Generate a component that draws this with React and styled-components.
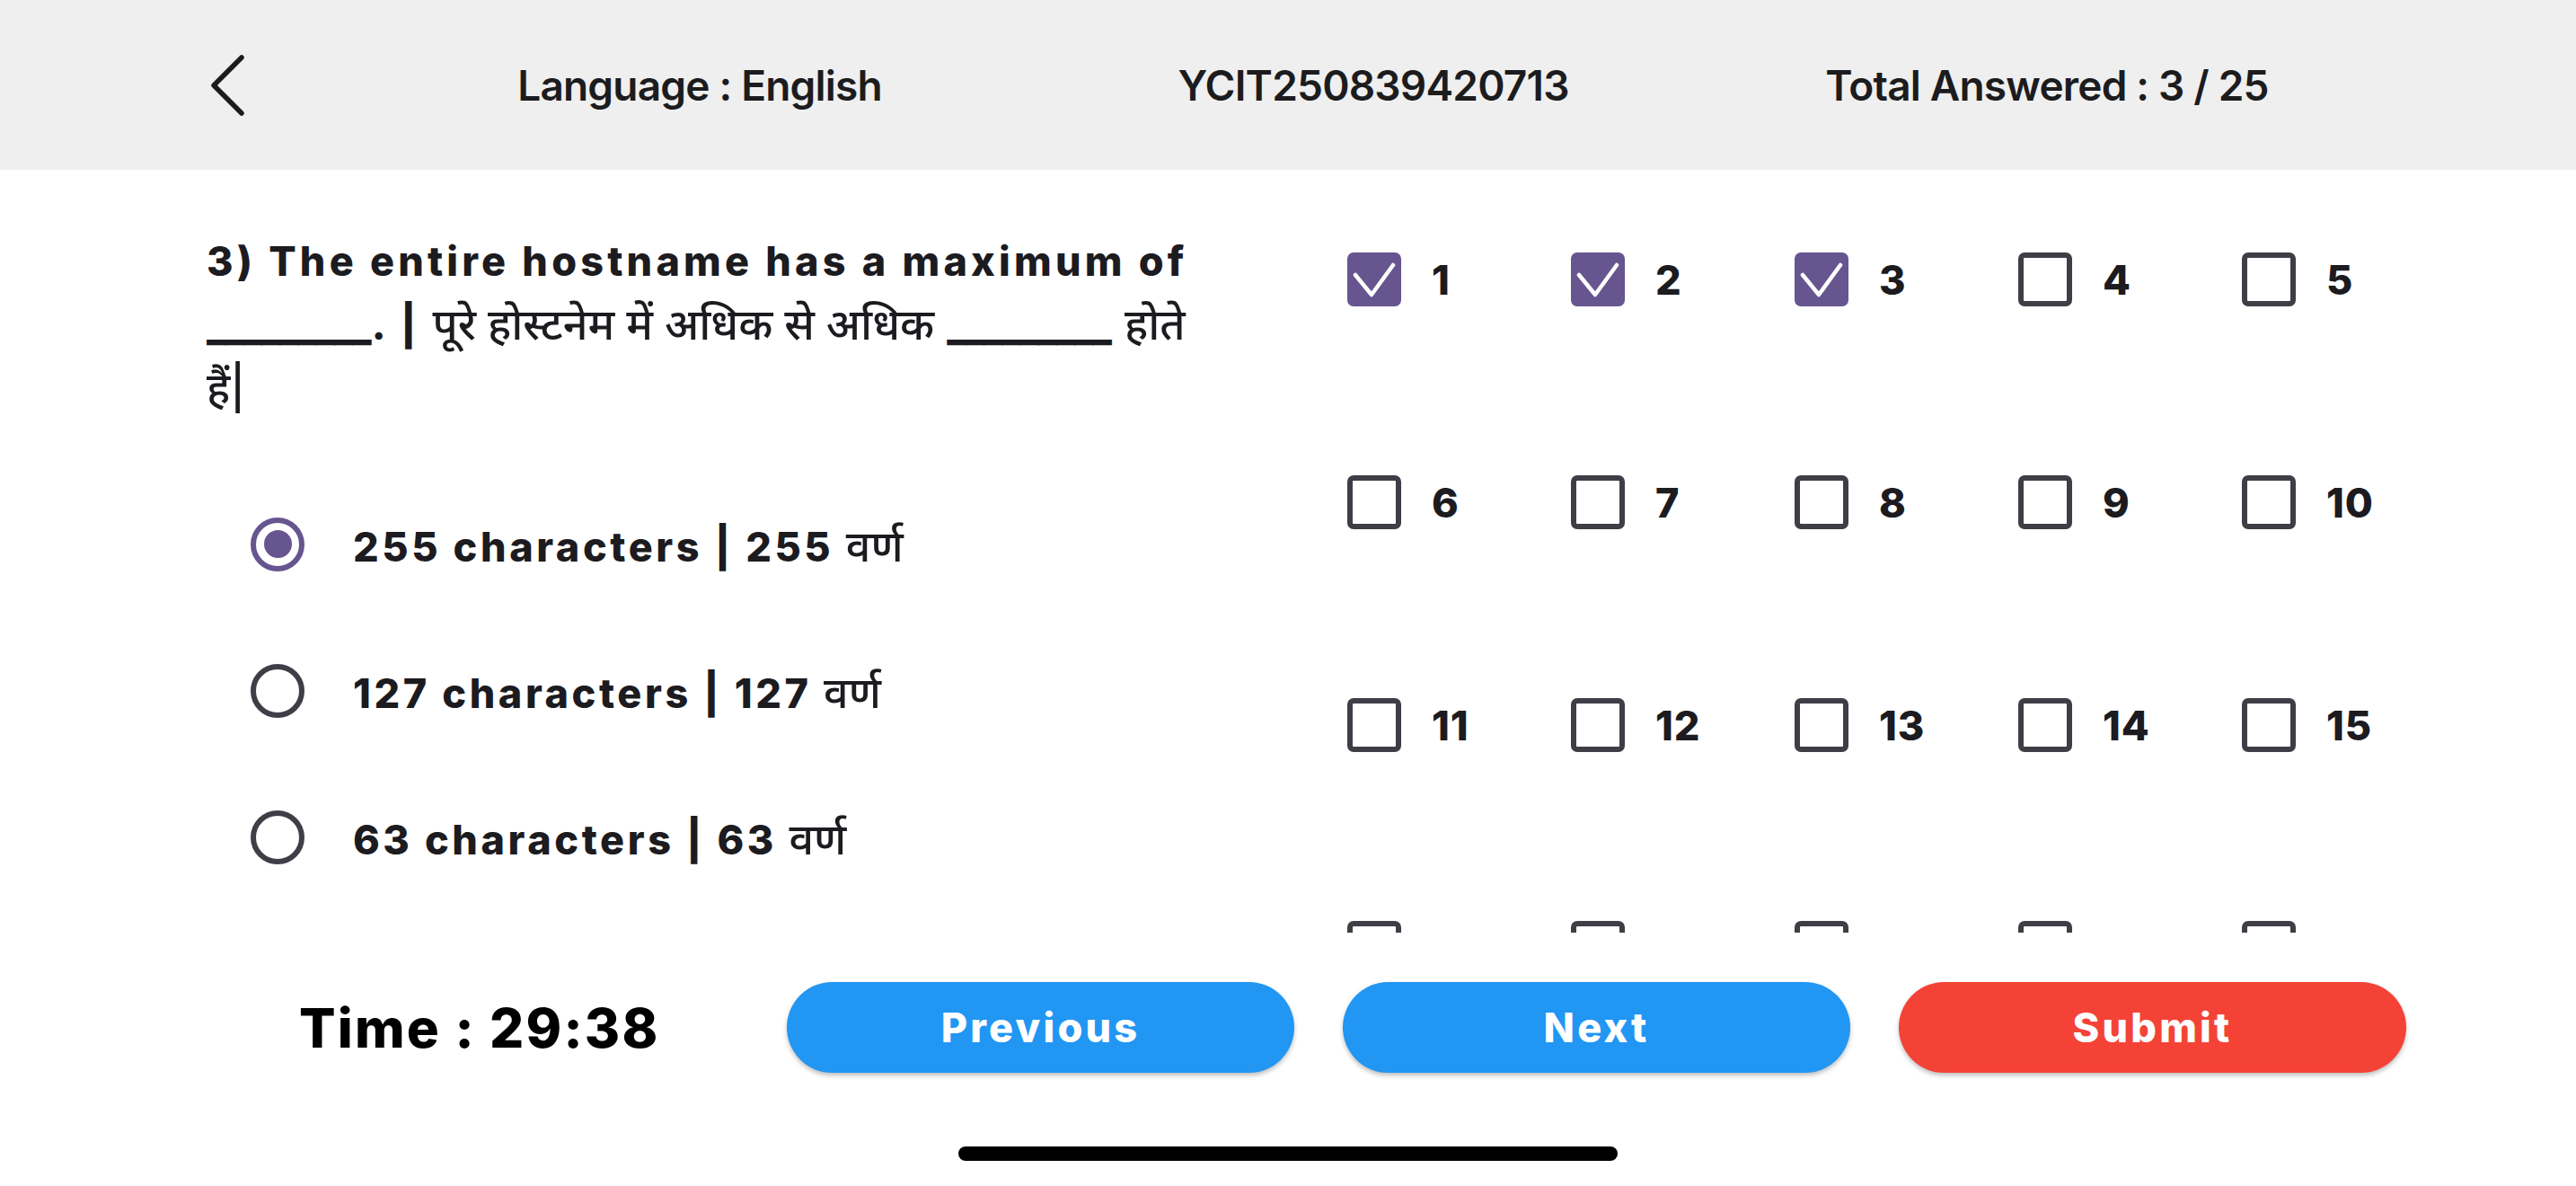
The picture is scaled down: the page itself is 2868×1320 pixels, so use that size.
import React from "react";
import styled, { createGlobalStyle } from "styled-components";

const Global = createGlobalStyle`
  html, body { margin: 0; padding: 0; background: #ffffff; }
  body {
    font-family: Inter, "Noto Sans", "Noto Sans Devanagari", "Lohit Devanagari", "DejaVu Sans", sans-serif;
    color: #1c1b1f;
  }
  * { box-sizing: border-box; }
`;

const Page = styled.div`
  width: 2868px;
  height: 1320px;
  display: flex;
  flex-direction: column;
  overflow: hidden;
  background: #ffffff;
`;

const Header = styled.header`
  flex: 0 0 189px;
  display: flex;
  align-items: center;
  padding: 0 214px 0 233px;
  background: #efefef;
`;

const BackButton = styled.button`
  display: flex;
  align-items: center;
  justify-content: center;
  width: 41px;
  height: 72px;
  padding: 0;
  border: 0;
  background: transparent;
  cursor: pointer;
`;

const HeaderGrid = styled.div`
  flex: 1;
  margin-left: 130px;
  display: grid;
  grid-template-columns: repeat(3, 1fr);
`;

const HeaderItem = styled.div`
  text-align: center;
  font-size: 46px;
  font-weight: 600;
  letter-spacing: -0.8px;
  color: #1c1c1e;
`;

const Main = styled.main`
  flex: 0 0 849px;
  display: flex;
  overflow: hidden;
`;

const QuestionCol = styled.section`
  flex: 0 0 1340px;
  padding: 67px 0 0 230px;
`;

const QuestionText = styled.p`
  margin: 0;
  font-size: 45px;
  line-height: 70px;
  font-weight: 800;
  letter-spacing: 4.2px;
  color: #1c1b1f;
`;

const Hindi = styled.span`
  font-size: 48.5px;
  font-weight: 500;
  letter-spacing: 0;
`;

const Blank = styled.span`
  font-weight: 900;
  letter-spacing: -2px;
  margin-right: 2px;
`;

const Options = styled.div`
  margin-top: 56px;
  padding-left: 49px;
  display: flex;
  flex-direction: column;
`;

const OptionRow = styled.label`
  height: 163px;
  display: flex;
  align-items: center;
  cursor: pointer;
`;

const Radio = styled.span`
  flex: 0 0 60px;
  width: 60px;
  height: 60px;
  border-radius: 50%;
  border: 6px solid ${(p) => (p.$checked ? "#67558f" : "#3f3e46")};
  display: flex;
  align-items: center;
  justify-content: center;
  &::after {
    content: "";
    width: 31px;
    height: 31px;
    border-radius: 50%;
    background: ${(p) => (p.$checked ? "#67558f" : "transparent")};
  }
`;

const OptionLabel = styled.span`
  margin-left: 54px;
  font-size: 45px;
  font-weight: 800;
  letter-spacing: 3.6px;
  color: #1c1b1f;
  white-space: nowrap;
`;

const Grid = styled.div`
  margin-left: 160px;
  padding-top: 92px;
  display: grid;
  grid-template-columns: repeat(5, 249px);
  row-gap: 188px;
  align-content: start;
`;

const Cell = styled.div`
  display: flex;
  align-items: center;
  gap: 34px;
  height: 60px;
`;

const Box = styled.span`
  flex: 0 0 60px;
  width: 60px;
  height: 60px;
  border-radius: 7px;
  border: 6px solid ${(p) => (p.$checked ? "#67558f" : "#3f3e46")};
  background: ${(p) => (p.$checked ? "#67558f" : "#ffffff")};
  display: flex;
  align-items: center;
  justify-content: center;
`;

const Num = styled.span`
  font-size: 45px;
  font-weight: 800;
  letter-spacing: 1px;
  color: #1c1b1f;
`;

const Footer = styled.footer`
  flex: 1;
  display: flex;
  flex-direction: column;
  padding-top: 55px;
`;

const ActionRow = styled.div`
  display: flex;
  align-items: center;
  height: 101px;
  padding-left: 333px;
  gap: 54px;
`;

const Timer = styled.div`
  flex: 0 0 489px;
  font-size: 60px;
  font-weight: 800;
  letter-spacing: 2.2px;
  color: #000000;
`;

const ActionButton = styled.button`
  flex: 0 0 565px;
  height: 101px;
  border: 0;
  border-radius: 51px;
  background: ${(p) => p.$bg};
  color: #ffffff;
  font-family: inherit;
  font-size: 45px;
  font-weight: 800;
  letter-spacing: 3.2px;
  box-shadow: 0 3px 5px rgba(0, 0, 0, 0.25);
  cursor: pointer;
`;

const HomeIndicator = styled.div`
  width: 734px;
  height: 16px;
  margin: 82px auto 0;
  border-radius: 8px;
  background: #000000;
`;

const Check = () => (
  <svg width="48" height="48" viewBox="0 0 48 48" fill="none">
    <polyline
      points="3,19 21,41 45,8"
      stroke="#ffffff"
      strokeWidth="4.5"
      strokeLinecap="round"
      strokeLinejoin="round"
    />
  </svg>
);

const options = [
  { en: "255 characters | 255 ", hi: "वर्ण", checked: true },
  { en: "127 characters | 127 ", hi: "वर्ण", checked: false },
  { en: "63 characters | 63 ", hi: "वर्ण", checked: false },
];

const answered = new Set([1, 2, 3]);
const questions = Array.from({ length: 25 }, (_, i) => i + 1);

export default function App() {
  return (
    <>
      <Global />
      <Page>
        <Header>
          <BackButton aria-label="Back">
            <svg width="41" height="72" viewBox="0 0 41 72" fill="none">
              <polyline
                points="36,5 5,36 36,67"
                stroke="#1c1c1e"
                strokeWidth="5.5"
                strokeLinecap="round"
                strokeLinejoin="round"
              />
            </svg>
          </BackButton>
          <HeaderGrid>
            <HeaderItem>Language : English</HeaderItem>
            <HeaderItem>YCIT250839420713</HeaderItem>
            <HeaderItem>Total Answered : 3 / 25</HeaderItem>
          </HeaderGrid>
        </Header>

        <Main>
          <QuestionCol>
            <QuestionText>
              3) The entire hostname has a maximum of <Blank>_________</Blank>. |{" "}
              <Hindi>पूरे होस्टनेम में अधिक से अधिक</Hindi> <Blank>_________</Blank>{" "}
              <Hindi>होते हैं|</Hindi>
            </QuestionText>
            <Options>
              {options.map((o) => (
                <OptionRow key={o.en}>
                  <Radio $checked={o.checked} />
                  <OptionLabel>
                    {o.en}
                    <Hindi>{o.hi}</Hindi>
                  </OptionLabel>
                </OptionRow>
              ))}
            </Options>
          </QuestionCol>

          <Grid>
            {questions.map((n) => (
              <Cell key={n}>
                <Box $checked={answered.has(n)}>{answered.has(n) && <Check />}</Box>
                <Num>{n}</Num>
              </Cell>
            ))}
          </Grid>
        </Main>

        <Footer>
          <ActionRow>
            <Timer>Time : 29:38</Timer>
            <ActionButton $bg="#2196f3">Previous</ActionButton>
            <ActionButton $bg="#2196f3">Next</ActionButton>
            <ActionButton $bg="#f44336">Submit</ActionButton>
          </ActionRow>
          <HomeIndicator />
        </Footer>
      </Page>
    </>
  );
}
